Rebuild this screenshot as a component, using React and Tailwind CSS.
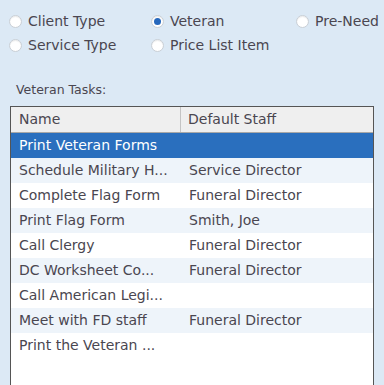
const rows = [
  { name: "Print Veteran Forms", staff: "" },
  { name: "Schedule Military H...", staff: "Service Director" },
  { name: "Complete Flag Form", staff: "Funeral Director" },
  { name: "Print Flag Form", staff: "Smith, Joe" },
  { name: "Call Clergy", staff: "Funeral Director" },
  { name: "DC Worksheet Co...", staff: "Funeral Director" },
  { name: "Call American Legi...", staff: "" },
  { name: "Meet with FD staff", staff: "Funeral Director" },
  { name: "Print the Veteran ...", staff: "" },
];

function Radio({ label, checked, className = "" }) {
  return (
    <div className={"flex items-center gap-[6px] " + className}>
      <span className="w-[13px] h-[13px] rounded-full bg-white border border-[#c9cfd6] flex items-center justify-center shadow-[inset_0_1px_1px_rgba(0,0,0,0.08)]">
        {checked && <span className="w-[7px] h-[7px] rounded-full bg-[#2668bd]" />}
      </span>
      <span>{label}</span>
    </div>
  );
}

export default function App() {
  return (
    <div
      className="w-[384px] h-[385px] overflow-hidden bg-[#dce9f5] text-[#4a4650] text-[14px]"
      style={{ fontFamily: '"DejaVu Sans", sans-serif' }}
    >
      <div className="pl-[9px] pt-[12px] grid grid-cols-[142px_145px_auto] gap-y-[6px] leading-[18px]">
        <Radio label="Client Type" />
        <Radio label="Veteran" checked />
        <Radio label="Pre-Need" />
        <Radio label="Service Type" />
        <Radio label="Price List Item" />
      </div>

      <div className="pl-[16px] pt-[28px] text-[12.5px] leading-[16px]">Veteran Tasks:</div>

      <div className="ml-[10px] mt-[8px] w-[364px] h-[300px] bg-white border border-[#555]">
        <div className="flex h-[26px] bg-[#efefef] border-b border-[#a8a8a8]">
          <div className="w-[170px] pl-[8px] flex items-center border-r border-[#c4c4c4]">Name</div>
          <div className="pl-[7px] flex items-center">Default Staff</div>
        </div>
        {rows.map((r, i) => (
          <div
            key={i}
            className={
              "flex h-[25px] items-center " +
              (i === 0 ? "bg-[#2a6fbe] text-white" : i % 2 === 1 ? "bg-[#eef4fa]" : "bg-white")
            }
          >
            <div className="w-[170px] pl-[8px] whitespace-nowrap overflow-hidden">{r.name}</div>
            <div className="pl-[8px] whitespace-nowrap">{r.staff}</div>
          </div>
        ))}
      </div>
    </div>
  );
}
